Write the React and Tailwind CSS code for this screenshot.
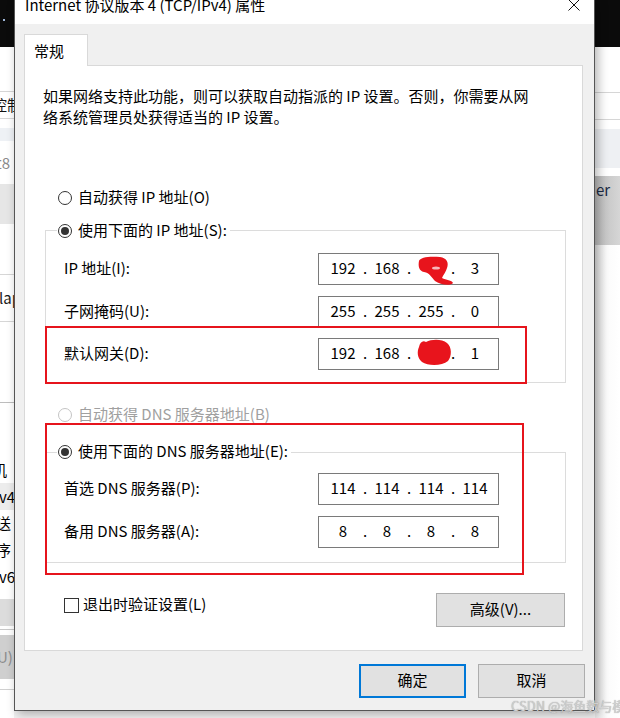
import React from "react";

const ipRows = [
  { label: "IP 地址(I):", parts: ["192", "168", "", "3"] },
  { label: "子网掩码(U):", parts: ["255", "255", "255", "0"] },
  { label: "默认网关(D):", parts: ["192", "168", "", "1"] },
];

const dnsRows = [
  { label: "首选 DNS 服务器(P):", parts: ["114", "114", "114", "114"] },
  { label: "备用 DNS 服务器(A):", parts: ["8", "8", "8", "8"] },
];

const ipGaps = ["mt-[15px]", "mt-[11px]", "mt-[10px]"];
const dnsGaps = ["mt-[14px]", "mt-[11px]"];

function Radio({ checked, disabled }) {
  return (
    <span
      className={
        disabled
          ? "flex h-[14px] w-[14px] shrink-0 items-center justify-center rounded-full border border-[#c4c4c4] bg-white"
          : "flex h-[14px] w-[14px] shrink-0 items-center justify-center rounded-full border border-[#333333] bg-white"
      }
    >
      {checked && <span className="h-[8px] w-[8px] rounded-full bg-[#333333]" />}
    </span>
  );
}

function IpField({ parts }) {
  return (
    <div className="flex h-[32px] w-[181px] shrink-0 items-center border border-[#7a7a7a] bg-white pb-[2px] pl-[6px] text-[15px] leading-[20px]">
      {parts.map((p, i) => (
        <React.Fragment key={i}>
          <span className="w-[36px] text-center">{p}</span>
          {i < 3 && <span className="w-[8px] text-center">.</span>}
        </React.Fragment>
      ))}
    </div>
  );
}

function Row({ row, gap }) {
  return (
    <div className={`${gap} flex items-center pl-[18px]`}>
      <span className="w-[254px] shrink-0 pb-[2px]">{row.label}</span>
      <IpField parts={row.parts} />
    </div>
  );
}

function LeftStrip() {
  return (
    <div className="flex w-[14px] shrink-0 flex-col overflow-hidden whitespace-nowrap text-[15px] leading-[20px]">
      <div className="relative h-[47px] bg-[#0b0b0b]">
        <span className="absolute left-[3px] top-[19px] h-[2px] w-[2px] bg-[#9fb7d8]" />
      </div>
      <div className="h-[45px] border-b border-[#d6d6d6]" />
      <div className="flex h-[27px] items-center border-b border-[#d6d6d6]">
        <span className="-ml-[8px] text-[#111]">控制</span>
      </div>
      <div className="h-[9px]" />
      <div className="h-[13px] bg-[#eef1f5]" />
      <div className="flex h-[43px] items-center">
        <span className="-ml-[4px] text-[#8a8a8a]">t8</span>
      </div>
      <div className="h-[40px] bg-[#e6e6e6]" />
      <div className="h-[51px] border-b border-[#d6d6d6]" />
      <div className="flex h-[47px] items-center border-b border-[#d6d6d6]">
        <span className="-ml-[1px] text-[#1a1a1a]">lap</span>
      </div>
      <div className="h-[81px] border-b border-[#bdbdbd]" />
      <div className="h-[53px]" />
      <div className="flex h-[27px] items-center">
        <span className="-ml-[8px]">机</span>
      </div>
      <div className="flex h-[27px] items-center bg-[#ececec]">
        <span className="-ml-[1px]">v4</span>
      </div>
      <div className="flex h-[26px] items-center">
        <span className="-ml-[4px]">送</span>
      </div>
      <div className="flex h-[27px] items-center">
        <span className="-ml-[4px]">序</span>
      </div>
      <div className="flex h-[27px] items-center">
        <span className="-ml-[1px]">v6</span>
      </div>
      <div className="h-[9px]" />
      <div className="h-[27px] bg-[#dcdcdc]" />
      <div className="h-[4px] border-b border-[#c8c8c8]" />
      <div className="h-[5px]" />
      <div className="flex h-[44px] items-center bg-[#cfcfcf]">
        <span className="-ml-[3px] text-[#8c8c8c]">U)</span>
      </div>
      <div className="h-[11px] border-b border-[#d0d0d0]" />
      <div className="flex-1" />
    </div>
  );
}

function RightStrip() {
  return (
    <div className="flex flex-1 flex-col overflow-hidden whitespace-nowrap text-[15px] leading-[20px]">
      <div className="h-[47px] bg-[#0b0b0b]" />
      <div className="h-[46px] border-b border-[#d6d6d6]" />
      <div className="h-[27px] border-b border-[#d6d6d6]" />
      <div className="h-[9px]" />
      <div className="h-[39px] bg-[#eef0f3]" />
      <div className="h-[8px]" />
      <div className="h-[69px] bg-gradient-to-r from-[#bdbdbd] to-[#d6d6d6] pt-[4px]">
        <span className="pl-[1px] text-[#1b2a44]">er</span>
      </div>
      <div className="flex-1 bg-gradient-to-r from-[#e4e4e4] via-[#fbfbfb] to-white" />
    </div>
  );
}

export default function App() {
  return (
    <div className="relative flex h-[718px] w-[620px] overflow-hidden bg-white font-['Noto_Sans_CJK_SC',sans-serif] text-black">
      <LeftStrip />

      <div className="flex w-[581px] shrink-0 flex-col">
        <div className="relative z-10 flex h-[711px] flex-col border-x border-b border-[#555555] bg-[#f0f0f0] shadow-[3px_3px_10px_rgba(0,0,0,0.3)]">
          {/* title bar */}
          <div className="flex h-[24px] shrink-0 items-start justify-between bg-white">
            <span className="-mt-[3px] pl-[10px] text-[15px] leading-[15px]">
              Internet 协议版本 4 (TCP/IPv4) 属性
            </span>
            <svg width="12" height="12" viewBox="0 0 12 12" className="-mt-[1px] mr-[14px]">
              <path d="M0.5 0.5 L11.5 11.5 M11.5 0.5 L0.5 11.5" stroke="#111" strokeWidth="1" fill="none" />
            </svg>
          </div>

          {/* client */}
          <div className="flex flex-1 flex-col pt-[10px] text-[15px] leading-[20px]">
            <div className="relative z-10 -mb-px ml-[9px] flex h-[32px] w-[64px] items-center border border-b-0 border-[#d9d9d9] bg-white pl-[9px]">
              常规
            </div>
            <div className="ml-[9px] flex w-[559px] flex-col border border-[#d9d9d9] bg-white pb-[23px] pt-[19px]">
              <p className="pl-[18px] leading-[21px]">
                如果网络支持此功能，则可以获取自动指派的 IP 设置。否则，你需要从网
                <br />
                络系统管理员处获得适当的 IP 设置。
              </p>

              <div className="mt-[64px] flex h-[14px] items-center gap-[6px] pl-[33px]">
                <Radio />
                <span className="pb-[2px]">自动获得 IP 地址(O)</span>
              </div>

              <div className="ml-[20px] mr-[16px] mt-[25px] border border-[#dcdcdc] pb-[12px]">
                <div className="-mt-[7px] ml-[11px] flex h-[14px]">
                  <span className="flex items-center gap-[6px] bg-white pl-[1px] pr-[3px]">
                    <Radio checked />
                    <span className="pb-[2px]">使用下面的 IP 地址(S):</span>
                  </span>
                </div>
                {ipRows.map((r, i) => (
                  <Row key={r.label} row={r} gap={ipGaps[i]} />
                ))}
              </div>

              <div className="mt-[25px] flex h-[14px] items-center gap-[6px] pl-[33px] text-[#a0a0a0]">
                <Radio disabled />
                <span className="pb-[2px]">自动获得 DNS 服务器地址(B)</span>
              </div>

              <div className="ml-[20px] mr-[16px] mt-[30px] border border-[#dcdcdc] pb-[14px]">
                <div className="-mt-[8px] ml-[11px] flex h-[14px]">
                  <span className="flex items-center gap-[6px] bg-white pl-[1px] pr-[3px]">
                    <Radio checked />
                    <span className="pb-[2px]">使用下面的 DNS 服务器地址(E):</span>
                  </span>
                </div>
                {dnsRows.map((r, i) => (
                  <Row key={r.label} row={r} gap={dnsGaps[i]} />
                ))}
              </div>

              <div className="mt-[30px] flex items-start justify-between pl-[39px] pr-[17px]">
                <div className="mt-[1px] flex items-center gap-[4px]">
                  <span className="h-[15px] w-[15px] border border-[#333333] bg-white" />
                  <span className="pb-[2px]">退出时验证设置(L)</span>
                </div>
                <button className="h-[34px] w-[129px] border border-[#adadad] bg-[#e1e1e1] pb-[2px]">
                  高级(V)...
                </button>
              </div>
            </div>

            <div className="mt-[13px] flex justify-end gap-[12px] pr-[9px]">
              <button className="h-[34px] w-[107px] border-2 border-[#0078d7] bg-[#e1e1e1] pb-[2px]">
                确定
              </button>
              <button className="h-[34px] w-[107px] border border-[#adadad] bg-[#e1e1e1] pb-[2px]">
                取消
              </button>
            </div>
          </div>
        </div>
        <div className="flex-1 bg-[#f2f2f2]" />
      </div>

      <RightStrip />

      {/* annotations drawn over the screenshot */}
      <div className="pointer-events-none absolute left-[45px] top-[326px] z-20 h-[58px] w-[482px] border-2 border-[#e6141c]" />
      <div className="pointer-events-none absolute left-[45px] top-[423px] z-20 h-[152px] w-[479px] border-2 border-[#e6141c]" />

      <svg className="absolute left-[416px] top-[255px] z-20" width="40" height="32" viewBox="0 0 40 32">
        <path
          d="M3 6 C4 2, 14 1, 24 2 C31 3, 33 8, 31 13 C30 17, 27 20, 26 23 C30 25, 36 25, 37 28 C35 31, 24 30, 19 26 C15 22, 14 18, 8 17 C3 16, 2 11, 3 6 Z"
          fill="#e8141c"
        />
        <ellipse cx="20" cy="13" rx="4" ry="1.6" fill="#f7b8bb" />
      </svg>
      <svg className="absolute left-[414px] top-[338px] z-20" width="40" height="30" viewBox="0 0 40 30">
        <path
          d="M5 9 C6 4, 9 2, 12 4 C18 1, 28 1, 33 5 C38 9, 38 18, 34 23 C28 28, 14 28, 8 24 C3 20, 3 13, 5 9 Z"
          fill="#e8141c"
        />
      </svg>

      <span className="absolute left-[511px] top-[697px] z-20 whitespace-nowrap text-[13px] leading-[18px] text-[#cfcfcf] [text-shadow:0_0_1px_rgba(90,90,90,0.6)]">
        CSDN @海鱼数与模
      </span>
    </div>
  );
}
